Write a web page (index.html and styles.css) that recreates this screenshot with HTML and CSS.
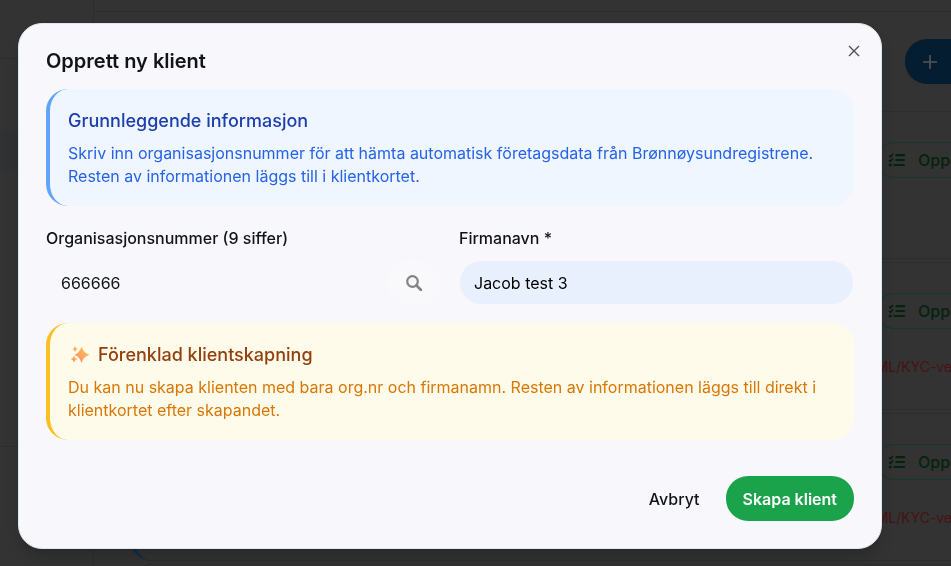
FILE: index.html
```html
<!DOCTYPE html>
<html lang="nb">
<head>
<meta charset="utf-8">
<meta name="viewport" content="width=device-width, initial-scale=1">
<title>Opprett ny klient</title>
<link rel="stylesheet" href="styles.css">
</head>
<body>
<svg width="0" height="0" class="sprite" aria-hidden="true">
  <symbol id="tasks" viewBox="0 0 18 14">
    <path d="M1 2.5l1.4 1.4L5 1M1 7l1.400 1.400L5 5.500" fill="none" stroke="currentColor" stroke-width="1.6"/>
    <circle cx="2.2" cy="12" r="1.6" fill="currentColor"/>
    <path d="M8.500 2.200h7.500M8.500 7h7.500M6.500 12h9.500" fill="none" stroke="currentColor" stroke-width="2.2" stroke-linecap="round"/>
  </symbol>
</svg>
<div class="app" inert>
  <aside class="sidebar">
    <div class="side-head"></div>
    <div class="side-nav"><div class="side-active"></div></div>
    <div class="side-foot"></div>
  </aside>
  <main class="main">
    <div class="topline"></div>
    <div class="toolbar"><button class="new-client" type="button" aria-label="Ny"><svg width="14" height="14" viewBox="0 0 14 14"><path d="M7 0v14M0 7h14" stroke="currentColor" stroke-width="1.6"/></svg></button></div>
    <section class="card">
      <button class="task" type="button"><svg width="18" height="14"><use href="#tasks"/></svg>Oppgaver</button>
    </section>
    <section class="card">
      <button class="task" type="button"><svg width="18" height="14"><use href="#tasks"/></svg>Oppgaver</button>
      <p class="alert">AML/KYC-ve</p>
    </section>
    <section class="card">
      <button class="task" type="button"><svg width="18" height="14"><use href="#tasks"/></svg>Oppgaver</button>
      <p class="alert">AML/KYC-ve</p>
    </section>
    <section class="card"></section>
  </main>
</div>
<div class="overlay">
  <form class="dialog" role="dialog" aria-modal="true" aria-labelledby="title">
    <button class="close" type="button" aria-label="Lukk"><svg width="12" height="12" viewBox="0 0 12 12"><path d="M1 1l10 10M11 1L1 11" stroke="currentColor" stroke-width="1.4"/></svg></button>
    <h1 class="title" id="title">Opprett ny klient</h1>
    <section class="notice info">
      <h2>Grunnleggende informasjon</h2>
      <p>Skriv inn organisasjonsnummer för att hämta automatisk företagsdata från Brønnøysundregistrene. Resten av informationen läggs till i klientkortet.</p>
    </section>
    <div class="fields">
      <div class="field">
        <label for="org">Organisasjonsnummer (9 siffer)</label>
        <div class="lookup">
          <input id="org" type="text" value="666666">
          <button class="search" type="button" aria-label="Søk"><svg width="16" height="16" viewBox="0 0 16 16"><circle cx="6.5" cy="6.5" r="5.3" fill="none" stroke="currentColor" stroke-width="2.2"/><path d="M10.5 10.5L15 15" stroke="currentColor" stroke-width="2.6" stroke-linecap="round"/></svg></button>
        </div>
      </div>
      <div class="field">
        <label for="firm">Firmanavn *</label>
        <input class="filled" id="firm" type="text" value="Jacob test 3">
      </div>
    </div>
    <section class="notice tip">
      <h2><svg class="sparkle" width="20" height="20" viewBox="0 0 20 20" aria-hidden="true"><defs><linearGradient id="spark" x1="1" y1="0" x2="0" y2="1"><stop offset="0" stop-color="#ffc94d"/><stop offset="1" stop-color="#f88b72"/></linearGradient></defs><g fill="url(#spark)"><path d="M11.5 1.500Q13.300 7.700 19.500 9.700Q13.300 11.800 11.500 18Q9.700 11.800 4.500 9.700Q9.700 7.700 11.500 1.500Z"/><path d="M5 1Q5.500 3.300 7.700 4Q5.500 4.700 5 7Q4.500 4.700 2.500 4Q4.500 3.300 5 1Z"/><path d="M4 10.500Q4.700 13.300 7.500 14Q4.700 14.800 4 17.500Q3.300 14.800 .8 14Q3.300 13.300 4 10.500Z"/></g></svg>Förenklad klientskapning</h2>
      <p>Du kan nu skapa klienten med bara org.nr och firmanamn. Resten av informationen läggs till direkt i klientkortet efter skapandet.</p>
    </section>
    <div class="actions">
      <button class="cancel" type="button">Avbryt</button>
      <button class="submit" type="submit">Skapa klient</button>
    </div>
  </form>
</div>
</body>
</html>
```
FILE: styles.css
```css
* { box-sizing: border-box; }
body, h1, h2, p { margin: 0; }
body {
  height: 100vh;
  overflow: hidden;
  background: #333;
  color: #111518;
  font: 400 16px/24px Inter, sans-serif;
}
button, input { font: inherit; color: inherit; border: 0; background: none; }
svg { display: block; flex: none; }
.sprite { position: absolute; }
.app { display: flex; height: 100vh; overflow: hidden; }
.sidebar { flex: 0 0 94px; border-right: 1px solid #2d2d2d; }
.side-head { height: 59px; border-bottom: 1px solid #2d2d2d; }
.side-nav { height: 388px; padding-top: 72px; border-bottom: 1px solid #2d2d2d; }
.side-active { height: 40px; background: #2f3133; }
.main { flex: 1; min-width: 0; }
.topline { height: 12px; border-bottom: 1px solid #2d2d2d; }
.toolbar { height: 99px; padding-top: 27px; display: flex; justify-content: flex-end; }
.new-client {
  flex: none;
  width: 140px;
  height: 45px;
  margin-right: -94px;
  padding: 0 18px;
  border-radius: 22px;
  background: #051d31;
  color: #555;
}
.card {
  height: 148px;
  margin: 0 -40px 3px 36px;
  padding: 30px 0 0;
  border: 1px solid #2d2d2d;
  border-left: 4px solid #132c4e;
  border-radius: 22px;
  display: flex;
  flex-direction: column;
  align-items: flex-end;
}
.task {
  flex: none;
  width: 144px;
  height: 36px;
  margin-right: -30px;
  padding: 0 11px;
  display: flex;
  align-items: center;
  gap: 12px;
  border: 1px solid #12392a;
  border-radius: 18px;
  color: #04230f;
  font-weight: 500;
}
.alert { width: 124px; margin-top: 26px; color: #481213; font-size: 14px; }
.overlay {
  position: fixed;
  inset: 0;
  display: grid;
  place-items: center;
  padding: 6px 51px 0 0;
}
.dialog {
  position: relative;
  width: 100%;
  max-width: 864px;
  padding: 25px 27px 27px;
  border: 1px solid #dce8ee;
  border-radius: 24px;
  background: #f8f7fc;
  box-shadow: 0 10px 15px -3px #0003;
}
.close { position: absolute; top: 21px; right: 21px; padding: 0; color: #505257; }
.title { font-size: 20px; line-height: 24px; font-weight: 600; }
.notice { padding: 20px 18px 18px; border-left: 4px solid; border-radius: 22px; }
.notice h2 { display: flex; align-items: center; gap: 8px; margin-bottom: 9px; font-size: 18px; line-height: 24px; font-weight: 500; }
.notice p { line-height: 23px; }
.sparkle { margin-left: 2px; }
.info { margin-top: 16px; border-color: #60a5fa; background: #eff6ff; color: #2563eb; }
.info h2 { color: #1e40af; }
.tip { border-color: #fbbf24; background: #fffbeb; color: #d97706; }
.tip h2 { color: #92400e; }
.fields { display: grid; grid-template-columns: 1fr 1fr; gap: 18px; margin: 20px 0 18px; }
.field { display: grid; gap: 10px; }
.field label { font-weight: 500; }
.field input {
  width: 100%;
  min-width: 0;
  height: 45px;
  padding: 0 14px;
  border: 1px solid transparent;
  border-radius: 22px;
  background-clip: padding-box;
}
.field .filled { background-color: #e8f0fe; color: #000; }
.lookup { display: flex; gap: 8px; }
.search { flex: none; width: 54px; padding: 0 19px; border-radius: 22px; background: #f9f8fb; color: #828287; }
.actions { display: flex; justify-content: flex-end; gap: 9px; margin-top: 36px; }
.actions button { height: 45px; padding: 0 17px; border-radius: 22px; font-weight: 500; }
.actions .submit { background: #1aa34a; color: #fff; font-weight: 600; }
```
